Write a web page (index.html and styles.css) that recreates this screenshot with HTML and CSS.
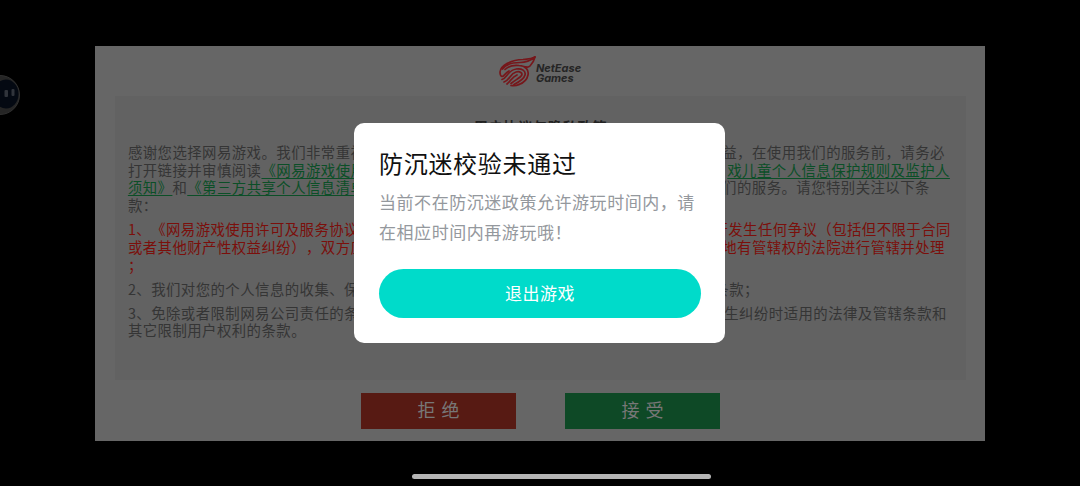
FILE: index.html
```html
<!DOCTYPE html>
<html lang="zh-CN">
<head>
  <meta charset="UTF-8" />
  <meta name="viewport" content="width=device-width, initial-scale=1.0"/>
  <title>网易游戏</title>
  <link rel="stylesheet" href="styles.css">
</head>
<body>

  <div class="agreement">
    <div class="logo-bar">
      <svg class="logo-mark" viewBox="0 0 38 32" fill="none" stroke="#76171b" stroke-width="1.7" stroke-linecap="round" stroke-linejoin="round">
        <path d="M37 2C33 4 30 4 25 4.500C13 5 3 10 2 17C2 19 2.500 21 4 21.500C6 21.500 7 18 11 16" />
        <path d="M4.500 14C7 10 14 7.500 22 7.500C27 7.500 32 6 37 2C36 6 35 8 32 11C30 13 29 12 26 11.500" />
        <path d="M7 14.500C10 11.500 16 10 21 10.500C28 11 31 15 30 20C29 25 25 28 21 29.500" />
        <path d="M4 24.500C9 23 10 15 18 14C24 13 28 16 27 20C26 24 21 27 16 29.500" />
        <path d="M6 27C12 25 12 18.500 18 17C22 16 25 18 23.500 20.500C22 23 17 25 13 28.500" />
        <path d="M9 29C13 26 14 22 19 20" />
        <path d="M13 30.500C17 31 20 30 21 29.500" />
      </svg>
      <div class="logo-text">NetEase<br>Games</div>
    </div>

    <div class="terms">
      <h1 class="terms-title">用户协议与隐私政策</h1>
      <div class="para">
        <div class="line end-21"><span>感谢您选择网易游戏。我们非常重视</span><span>益，在使用我们的服务前，请务必</span></div>
        <div class="line end-16"><span>打开链接并审慎阅读<a class="link">《网易游戏使用</a></span><a class="link">戏儿童个人信息保护规则及监护人</a></div>
        <div class="line end-36"><span><a class="link">须知》</a>和<a class="link">《第三方共享个人信息清单</a></span><span>们的服务。请您特别关注以下条</span></div>
        <div class="line">款：</div>
      </div>
      <div class="para warn">
        <div class="line end-15"><span>1、《网易游戏使用许可及服务协议</span><span>行发生任何争议（包括但不限于合同</span></div>
        <div class="line end-21"><span>或者其他财产性权益纠纷），双方应</span><span>地有管辖权的法院进行管辖并处理</span></div>
        <div class="line">；</div>
      </div>
      <div class="para">
        <div class="line end-207"><span>2、我们对您的个人信息的收集、保存</span><span>条款；</span></div>
      </div>
      <div class="para">
        <div class="line end-19"><span>3、免除或者限制网易公司责任的条款</span><span>生纠纷时适用的法律及管辖条款和</span></div>
        <div class="line">其它限制用户权利的条款。</div>
      </div>
    </div>

    <div class="actions">
      <button class="btn reject">拒绝</button>
      <button class="btn accept">接受</button>
    </div>
  </div>

  <svg class="float-ball" viewBox="0 0 21 42">
    <circle cx="0" cy="21" r="19.500" fill="#252525" stroke="#303030" />
    <ellipse cx="6" cy="20" rx="12.500" ry="14.500" fill="#040912" />
    <rect x="4.500" y="16" width="3.500" height="7" rx="1" fill="#30343b" />
    <rect x="11.500" y="15" width="3" height="7" rx="1" fill="#30343b" />
  </svg>

  <div class="modal">
    <h2 class="modal-title">防沉迷校验未通过</h2>
    <p class="modal-text">当前不在防沉迷政策允许游玩时间内，请在相应时间内再游玩哦！</p>
    <button class="exit-btn">退出游戏</button>
  </div>

  <div class="home-bar"></div>

</body>
</html>
```
FILE: styles.css
```css
* {
  box-sizing: border-box;
}

body {
  margin: 0;
  height: 486px;
  padding-top: 46px;
  overflow: hidden;
  background-color: #000;
  font-family: "Noto Sans CJK SC", sans-serif;
  text-spacing-trim: space-all;
}

button {
  border: none;
  padding: 0;
  font-family: inherit;
  cursor: pointer;
}

.agreement {
  width: 890px;
  height: 395px;
  margin-left: 95.4px;
  background-color: #666;
}

.logo-bar {
  display: flex;
  justify-content: center;
  height: 50px;
  padding: 9px 1px 0 0;
}

.logo-mark {
  width: 38px;
  height: 32px;
}

.logo-text {
  width: 46px;
  padding-top: 8px;
  font-family: Inter, sans-serif;
  font-size: 11px;
  font-weight: 700;
  font-style: italic;
  line-height: 10px;
  letter-spacing: 0;
  color: #252525;
}

.terms {
  height: 284px;
  margin: 0 19.5px;
  padding: 22px 0 0 13px;
  background-color: #626262;
  font-size: 14.4px;
  letter-spacing: 0.45px;
  line-height: 17.7px;
  color: #353535;
}

.terms-title {
  margin: 0 13px 7px 0;
  text-align: center;
  font-size: 14.4px;
  font-weight: bold;
  line-height: 18px;
  color: #222;
}

.para {
  margin-bottom: 6.4px;
}

.line {
  display: flex;
  justify-content: space-between;
  height: 17.7px;
  white-space: nowrap;
}

.warn {
  color: #7b0f0b;
}

.link {
  color: #0b4f27;
  text-decoration: underline;
  text-decoration-skip-ink: none;
  text-underline-offset: 2px;
}

/* right edge of each wrapped line */
.end-15 { padding-right: 15px; }
.end-16 { padding-right: 16px; }
.end-19 { padding-right: 19px; }
.end-21 { padding-right: 21px; }
.end-36 { padding-right: 36px; }
.end-207 { padding-right: 207px; }

.actions {
  display: flex;
  justify-content: center;
  gap: 49px;
  padding-top: 13px;
}

.btn {
  width: 155px;
  height: 35.5px;
  padding: 0 0 3px 2px;
  font-size: 18px;
  letter-spacing: 6px;
  text-indent: 4px;
  color: #777;
}

.reject {
  background-color: #571a13;
}

.accept {
  background-color: #0e4926;
}

.float-ball {
  position: absolute;
  left: 0;
  top: 74px;
  width: 21px;
  height: 42px;
}

.modal {
  position: absolute;
  left: 354px;
  top: 123px;
  width: 371.4px;
  height: 220px;
  padding: 23px 24.4px 0 25px;
  background-color: #fff;
  border-radius: 10px;
}

.modal-title {
  margin: 0;
  font-size: 24px;
  font-weight: 400;
  letter-spacing: 0.7px;
  line-height: 34px;
  color: #111;
}

.modal-text {
  margin: 7px 0 21.5px;
  font-size: 17px;
  letter-spacing: 0.55px;
  line-height: 30px;
  color: #94989d;
}

.exit-btn {
  width: 322px;
  height: 49.5px;
  padding-bottom: 2px;
  border-radius: 25px;
  background-color: #00dbca;
  font-size: 17px;
  font-weight: 400;
  letter-spacing: 0.5px;
  color: #fff;
}

.home-bar {
  width: 299px;
  height: 5px;
  margin: 33px 0 0 412px;
  border-radius: 3px;
  background-color: #b5b5b5;
}
```
